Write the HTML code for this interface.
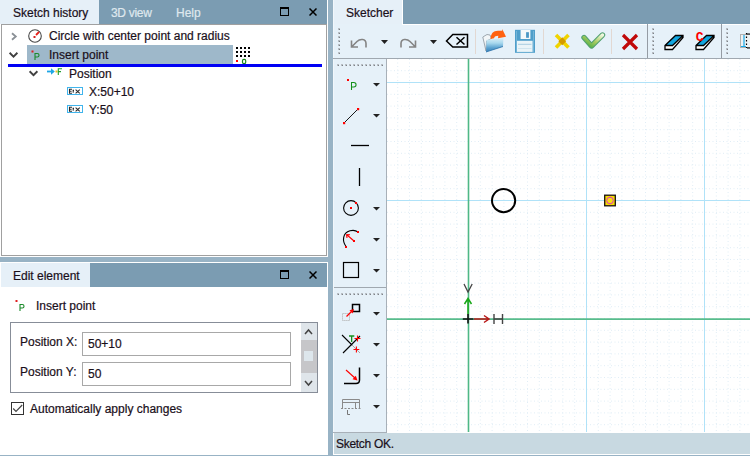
<!DOCTYPE html>
<html><head><meta charset="utf-8">
<style>
*{margin:0;padding:0;box-sizing:border-box}
html,body{width:750px;height:456px;overflow:hidden}
body{position:relative;background:#98b3c5;font-family:"Liberation Sans",sans-serif;font-size:12px;color:#000}
.a{position:absolute}
.t{position:absolute;white-space:nowrap;line-height:14px;-webkit-text-stroke:0.2px currentColor}
</style></head><body>

<!-- LEFT TOP PANEL -->
<div class="a" style="left:0;top:0;width:328px;height:257px;background:#fff"></div>
<div class="a" style="left:0;top:0;width:327px;height:24px;background:#7b9cb2"></div>
<div class="a" style="left:0;top:0;width:99px;height:24px;background:#e6f0f8"></div>
<div class="t" style="left:13px;top:6px;color:#1a0f1a">Sketch history</div>
<div class="t" style="left:111px;top:6px;color:#dfe8ee;letter-spacing:-0.3px">3D view</div>
<div class="t" style="left:176px;top:6px;color:#dfe8ee">Help</div>
<!-- restore & close -->
<div class="a" style="left:280px;top:7px;width:9px;height:9px;border:1px solid #000;border-top-width:2px"></div>
<svg class="a" style="left:309px;top:8px" width="8" height="8" viewBox="0 0 8 8"><path d="M0.5 0.5L7.5 7.5M7.5 0.5L0.5 7.5" stroke="#000" stroke-width="1.5"/></svg>
<!-- tree box -->
<div class="a" style="left:1px;top:24px;width:326px;height:232px;border:1px solid #a0a0a0;background:#fff"></div>


<!-- tree content -->
<svg class="a" style="left:0;top:0" width="40" height="80" viewBox="0 0 40 80"><path d="M12 33.2L15.8 36.5L12 39.8" fill="none" stroke="#8a9096" stroke-width="1.8"/><path d="M9.6 52.8L13.5 56.6L17.4 52.8" fill="none" stroke="#404040" stroke-width="1.9"/><path d="M29.6 71.3L33.5 75.1L37.4 71.3" fill="none" stroke="#404040" stroke-width="1.9"/></svg>
<svg class="a" style="left:27px;top:28px" width="16" height="16" viewBox="0 0 16 16"><circle cx="8" cy="8" r="6.3" fill="none" stroke="#484848" stroke-width="1.1"/><path d="M9 7L12 4" stroke="#e8201a" stroke-width="1.8"/><rect x="6.5" y="8" width="2" height="2" fill="#d82020"/></svg>
<div class="t" style="left:49px;top:29px;color:#1a0f1a">Circle with center point and radius</div>
<div class="a" style="left:27px;top:45px;width:206px;height:19px;background:#9eb8ca"></div>

<svg class="a" style="left:30px;top:49px" width="12" height="14" viewBox="0 0 12 14"><rect x="1.5" y="1.5" width="2" height="2" fill="#d82020"/><path d="M5 11V4.5H7.3C9.6 4.5 9.6 8 7.3 8H5" fill="none" stroke="#1a8a2a" stroke-width="1.1"/></svg>
<div class="t" style="left:49px;top:48px;color:#1a0f1a">Insert point</div>
<svg class="a" style="left:236px;top:47px" width="14" height="18" viewBox="0 0 14 18">
<g fill="#000"><rect x="0" y="0" width="2" height="2"/><rect x="4" y="0" width="2" height="2"/><rect x="8" y="0" width="2" height="2"/><rect x="12" y="0" width="2" height="2"/>
<rect x="0" y="4" width="2" height="2"/><rect x="4" y="4" width="2" height="2"/><rect x="8" y="4" width="2" height="2"/><rect x="12" y="4" width="2" height="2"/>
<rect x="0" y="8" width="2" height="2"/><rect x="4" y="8" width="2" height="2"/><rect x="8" y="8" width="2" height="2"/><rect x="12" y="8" width="2" height="2"/></g>
<rect x="0" y="13" width="2" height="2" fill="#f00"/><rect x="6.5" y="12.3" width="3.2" height="4.3" rx="1.4" fill="none" stroke="#1a8a1a" stroke-width="1.2"/></svg>
<div class="a" style="left:8px;top:64px;width:314px;height:3px;background:#0000f4"></div>

<svg class="a" style="left:46px;top:67px" width="18" height="9" viewBox="0 0 18 9"><path d="M1 4.5H6" fill="none" stroke="#1ea6e6" stroke-width="1.8"/><path d="M5 1.2L8.8 4.5L5 7.8Z" fill="#1ea6e6"/><rect x="9.5" y="3.5" width="2" height="2" fill="#e8c020"/><path d="M12.3 8V1.8H16M12.3 4.6H15" fill="none" stroke="#20a030" stroke-width="1.1"/></svg>
<div class="t" style="left:69px;top:67px;color:#1a0f1a">Position</div>
<svg class="a" style="left:67px;top:87px" width="17" height="9" viewBox="0 0 17 9"><rect x="0.5" y="0.5" width="15" height="7" fill="#fff" stroke="#40b4ec" stroke-width="1"/><path d="M5 2.2H2.5V6.3H5M2.5 4.2H4.6M5.6 3.4H7M5.6 4.9H7M8.6 2.6L12.8 6.3M12.8 2.6L8.6 6.3" fill="none" stroke="#2a2a2a" stroke-width="1.1"/></svg>
<div class="t" style="left:89px;top:85px;color:#1a0f1a">X:50+10</div>
<svg class="a" style="left:67px;top:105px" width="17" height="9" viewBox="0 0 17 9"><rect x="0.5" y="0.5" width="15" height="7" fill="#fff" stroke="#40b4ec" stroke-width="1"/><path d="M5 2.2H2.5V6.3H5M2.5 4.2H4.6M5.6 3.4H7M5.6 4.9H7M8.6 2.6L12.8 6.3M12.8 2.6L8.6 6.3" fill="none" stroke="#2a2a2a" stroke-width="1.1"/></svg>
<div class="t" style="left:89px;top:103px;color:#1a0f1a">Y:50</div>

<!-- EDIT ELEMENT PANEL -->
<div class="a" style="left:0;top:262px;width:328px;height:193px;background:#fff"></div>
<div class="a" style="left:1px;top:263px;width:326px;height:24px;background:#7b9cb2"></div>
<div class="a" style="left:1px;top:263px;width:89px;height:24px;background:#e6f0f8"></div>
<div class="t" style="left:13px;top:269px;color:#1a0f1a">Edit element</div>


<div class="a" style="left:280px;top:270px;width:9px;height:9px;border:1px solid #000;border-top-width:2px"></div>
<svg class="a" style="left:309px;top:271px" width="8" height="8" viewBox="0 0 8 8"><path d="M0.5 0.5L7.5 7.5M7.5 0.5L0.5 7.5" stroke="#000" stroke-width="1.5"/></svg>
<!-- edit content -->
<svg class="a" style="left:14px;top:298px" width="12" height="14" viewBox="0 0 12 14"><rect x="1.5" y="2" width="2" height="2" fill="#e02020"/><path d="M6 13V6.5H8.3C10.6 6.5 10.6 10 8.3 10H6" fill="none" stroke="#1a8a2a" stroke-width="1.1"/></svg>
<div class="t" style="left:36px;top:299px;color:#1a0f1a">Insert point</div>
<div class="a" style="left:10px;top:322px;width:308px;height:71px;border:1px solid #878d98"></div>
<div class="t" style="left:20px;top:335px;color:#1a0f1a">Position X:</div>
<div class="a" style="left:82px;top:332px;width:209px;height:24px;border:1px solid #a8a8a8;background:#fff"></div>
<div class="t" style="left:88px;top:337px;color:#1a0f1a">50+10</div>
<div class="t" style="left:20px;top:365px;color:#1a0f1a">Position Y:</div>
<div class="a" style="left:82px;top:362px;width:209px;height:24px;border:1px solid #a8a8a8;background:#fff"></div>
<div class="t" style="left:88px;top:367px;color:#1a0f1a">50</div>
<div class="a" style="left:301px;top:323px;width:16px;height:69px;background:#dfe5ea"></div>
<div class="a" style="left:301px;top:340px;width:16px;height:33px;background:#c6c6c9"></div>
<div class="a" style="left:304px;top:351px;width:9px;height:10px;background:#dde6ec"></div>
<svg class="a" style="left:304px;top:328px" width="9" height="8" viewBox="0 0 9 8"><path d="M1 6L4.5 2L8 6" fill="none" stroke="#444" stroke-width="1.5"/></svg>
<svg class="a" style="left:304px;top:379px" width="9" height="8" viewBox="0 0 9 8"><path d="M1 2L4.5 6L8 2" fill="none" stroke="#444" stroke-width="1.5"/></svg>
<div class="a" style="left:11px;top:402px;width:13px;height:13px;border:1px solid #333;background:#fff"></div>
<svg class="a" style="left:11px;top:402px" width="13" height="13" viewBox="0 0 13 13"><path d="M2.2 6.5L5 9.3L11.2 3" fill="none" stroke="#444" stroke-width="1.2"/></svg>
<div class="t" style="left:30px;top:402px;color:#1a0f1a">Automatically apply changes</div>

<!-- RIGHT PANEL -->
<div class="a" style="left:333px;top:0;width:417px;height:455px;background:#fff"></div>
<div class="a" style="left:403px;top:0;width:347px;height:24px;background:#7b9cb2"></div>
<div class="a" style="left:333px;top:0;width:69px;height:24px;background:#e6f0f8"></div>
<div class="t" style="left:346px;top:6px;color:#1a0f1a">Sketcher</div>
<!-- toolbar -->
<div class="a" style="left:334px;top:24px;width:416px;height:34px;background:#e6f1f9"></div>
<div class="a" style="left:402px;top:24px;width:348px;height:1px;background:#fff"></div>
<div class="a" style="left:333px;top:0;width:1px;height:433px;background:#f2f7fb"></div>
<div class="a" style="left:333px;top:58px;width:417px;height:1px;background:#a0a8b0"></div>
<!-- vertical toolbar -->
<div class="a" style="left:334px;top:59px;width:52px;height:373px;background:#e6f1f9"></div>
<div class="a" style="left:386px;top:59px;width:1px;height:373px;background:#a8b0b8"></div>
<div class="a" style="left:333px;top:432px;width:54px;height:1px;background:#a8b0b8"></div>
<!-- status bar -->
<div class="a" style="left:334px;top:433px;width:416px;height:21px;background:#c8d9e1"></div>
<div class="t" style="left:336px;top:437px;color:#1a0f1a;letter-spacing:-0.3px">Sketch OK.</div>


<svg class="a" style="left:0;top:0" width="750" height="456" viewBox="0 0 750 456">
<!-- canvas -->
<rect x="387" y="59" width="363" height="373" fill="#fff"/>
<path d="M397.7 59V432M409.5 59V432M421.3 59V432M433.1 59V432M444.9 59V432M456.7 59V432M468.5 59V432M480.3 59V432M492.1 59V432M503.9 59V432M515.7 59V432M527.5 59V432M539.3 59V432M551.1 59V432M562.9 59V432M574.7 59V432M586.5 59V432M598.3 59V432M610.1 59V432M621.9 59V432M633.7 59V432M645.5 59V432M657.3 59V432M669.1 59V432M680.9 59V432M692.7 59V432M704.5 59V432M716.3 59V432M728.1 59V432M739.9 59V432M387 70.7H750M387 82.5H750M387 94.3H750M387 106.1H750M387 117.9H750M387 129.7H750M387 141.5H750M387 153.3H750M387 165.1H750M387 176.9H750M387 188.7H750M387 200.5H750M387 212.3H750M387 224.1H750M387 235.9H750M387 247.7H750M387 259.5H750M387 271.3H750M387 283.1H750M387 294.9H750M387 306.7H750M387 318.5H750M387 330.3H750M387 342.1H750M387 353.9H750M387 365.7H750M387 377.5H750M387 389.3H750M387 401.1H750M387 412.9H750M387 424.7H750" stroke="#e0edf6" stroke-width="1" stroke-dasharray="1 2.5" fill="none"/>
<path d="M586.5 59V432M704.5 59V432M387 82.5H750M387 200.5H750" stroke="#b0e2f8" stroke-width="1" fill="none"/>
<path d="M468.5 59V432" stroke="#4fb886" stroke-width="1.6" fill="none"/><path d="M387 319H750" stroke="#58bc8c" stroke-width="1.75" fill="none"/>
<circle cx="503.6" cy="200.6" r="11.6" fill="none" stroke="#000" stroke-width="2"/>
<rect x="604.7" y="195.2" width="10.6" height="10.6" fill="#f4dc00" stroke="#1a1010" stroke-width="1.3"/>
<circle cx="610" cy="200.5" r="3.3" fill="#f6e010" stroke="#e030d0" stroke-width="1"/>
<path d="M474 319H488.5M484 315.5L489 319L484 322.5" stroke="#b81818" stroke-width="1.5" fill="none"/>
<path d="M468 314V298.5M464.5 304L468 298.5L471.5 304" stroke="#18a818" stroke-width="1.5" fill="none"/>
<path d="M462.8 319H473.5M468 314V323.5" stroke="#111" stroke-width="1.6" fill="none"/>
<path d="M494 314V324M502.5 314V324M494 319H502.5" stroke="#444" stroke-width="1.4" fill="none"/>
<path d="M464 284L468 292L472.2 284" stroke="#444" stroke-width="1.3" fill="none"/>

<!-- top toolbar icons -->
<g><rect x="338" y="28" width="2" height="2" fill="#b8bec4"/><rect x="339" y="29" width="1" height="1" fill="#7c8288"/><rect x="652" y="28" width="2" height="2" fill="#b8bec4"/><rect x="653" y="29" width="1" height="1" fill="#7c8288"/><rect x="726" y="28" width="2" height="2" fill="#b8bec4"/><rect x="727" y="29" width="1" height="1" fill="#7c8288"/><rect x="338" y="32" width="2" height="2" fill="#b8bec4"/><rect x="339" y="33" width="1" height="1" fill="#7c8288"/><rect x="652" y="32" width="2" height="2" fill="#b8bec4"/><rect x="653" y="33" width="1" height="1" fill="#7c8288"/><rect x="726" y="32" width="2" height="2" fill="#b8bec4"/><rect x="727" y="33" width="1" height="1" fill="#7c8288"/><rect x="338" y="36" width="2" height="2" fill="#b8bec4"/><rect x="339" y="37" width="1" height="1" fill="#7c8288"/><rect x="652" y="36" width="2" height="2" fill="#b8bec4"/><rect x="653" y="37" width="1" height="1" fill="#7c8288"/><rect x="726" y="36" width="2" height="2" fill="#b8bec4"/><rect x="727" y="37" width="1" height="1" fill="#7c8288"/><rect x="338" y="40" width="2" height="2" fill="#b8bec4"/><rect x="339" y="41" width="1" height="1" fill="#7c8288"/><rect x="652" y="40" width="2" height="2" fill="#b8bec4"/><rect x="653" y="41" width="1" height="1" fill="#7c8288"/><rect x="726" y="40" width="2" height="2" fill="#b8bec4"/><rect x="727" y="41" width="1" height="1" fill="#7c8288"/><rect x="338" y="44" width="2" height="2" fill="#b8bec4"/><rect x="339" y="45" width="1" height="1" fill="#7c8288"/><rect x="652" y="44" width="2" height="2" fill="#b8bec4"/><rect x="653" y="45" width="1" height="1" fill="#7c8288"/><rect x="726" y="44" width="2" height="2" fill="#b8bec4"/><rect x="727" y="45" width="1" height="1" fill="#7c8288"/><rect x="338" y="48" width="2" height="2" fill="#b8bec4"/><rect x="339" y="49" width="1" height="1" fill="#7c8288"/><rect x="652" y="48" width="2" height="2" fill="#b8bec4"/><rect x="653" y="49" width="1" height="1" fill="#7c8288"/><rect x="726" y="48" width="2" height="2" fill="#b8bec4"/><rect x="727" y="49" width="1" height="1" fill="#7c8288"/><rect x="338" y="52" width="2" height="2" fill="#b8bec4"/><rect x="339" y="53" width="1" height="1" fill="#7c8288"/><rect x="652" y="52" width="2" height="2" fill="#b8bec4"/><rect x="653" y="53" width="1" height="1" fill="#7c8288"/><rect x="726" y="52" width="2" height="2" fill="#b8bec4"/><rect x="727" y="53" width="1" height="1" fill="#7c8288"/><rect x="337" y="64" width="2" height="2" fill="#b8bec4"/><rect x="338" y="65" width="1" height="1" fill="#7c8288"/><rect x="337" y="293" width="2" height="2" fill="#b8bec4"/><rect x="338" y="294" width="1" height="1" fill="#7c8288"/><rect x="341" y="64" width="2" height="2" fill="#b8bec4"/><rect x="342" y="65" width="1" height="1" fill="#7c8288"/><rect x="341" y="293" width="2" height="2" fill="#b8bec4"/><rect x="342" y="294" width="1" height="1" fill="#7c8288"/><rect x="345" y="64" width="2" height="2" fill="#b8bec4"/><rect x="346" y="65" width="1" height="1" fill="#7c8288"/><rect x="345" y="293" width="2" height="2" fill="#b8bec4"/><rect x="346" y="294" width="1" height="1" fill="#7c8288"/><rect x="349" y="64" width="2" height="2" fill="#b8bec4"/><rect x="350" y="65" width="1" height="1" fill="#7c8288"/><rect x="349" y="293" width="2" height="2" fill="#b8bec4"/><rect x="350" y="294" width="1" height="1" fill="#7c8288"/><rect x="353" y="64" width="2" height="2" fill="#b8bec4"/><rect x="354" y="65" width="1" height="1" fill="#7c8288"/><rect x="353" y="293" width="2" height="2" fill="#b8bec4"/><rect x="354" y="294" width="1" height="1" fill="#7c8288"/><rect x="357" y="64" width="2" height="2" fill="#b8bec4"/><rect x="358" y="65" width="1" height="1" fill="#7c8288"/><rect x="357" y="293" width="2" height="2" fill="#b8bec4"/><rect x="358" y="294" width="1" height="1" fill="#7c8288"/><rect x="361" y="64" width="2" height="2" fill="#b8bec4"/><rect x="362" y="65" width="1" height="1" fill="#7c8288"/><rect x="361" y="293" width="2" height="2" fill="#b8bec4"/><rect x="362" y="294" width="1" height="1" fill="#7c8288"/><rect x="365" y="64" width="2" height="2" fill="#b8bec4"/><rect x="366" y="65" width="1" height="1" fill="#7c8288"/><rect x="365" y="293" width="2" height="2" fill="#b8bec4"/><rect x="366" y="294" width="1" height="1" fill="#7c8288"/><rect x="369" y="64" width="2" height="2" fill="#b8bec4"/><rect x="370" y="65" width="1" height="1" fill="#7c8288"/><rect x="369" y="293" width="2" height="2" fill="#b8bec4"/><rect x="370" y="294" width="1" height="1" fill="#7c8288"/><rect x="373" y="64" width="2" height="2" fill="#b8bec4"/><rect x="374" y="65" width="1" height="1" fill="#7c8288"/><rect x="373" y="293" width="2" height="2" fill="#b8bec4"/><rect x="374" y="294" width="1" height="1" fill="#7c8288"/><rect x="377" y="64" width="2" height="2" fill="#b8bec4"/><rect x="378" y="65" width="1" height="1" fill="#7c8288"/><rect x="377" y="293" width="2" height="2" fill="#b8bec4"/><rect x="378" y="294" width="1" height="1" fill="#7c8288"/><rect x="381" y="64" width="2" height="2" fill="#b8bec4"/><rect x="382" y="65" width="1" height="1" fill="#7c8288"/><rect x="381" y="293" width="2" height="2" fill="#b8bec4"/><rect x="382" y="294" width="1" height="1" fill="#7c8288"/></g>
<path d="M334 287.5H386" stroke="#a0a8b0" stroke-width="1"/>
<path d="M647.5 24V58M721.5 24V58" stroke="#959ca4" stroke-width="1"/>
<path d="M475.5 29V54M543.5 29V54M611.5 29V54" stroke="#e2d8d2" stroke-width="1"/>
<!-- undo -->
<path d="M351.5 40.5V47H358M351.5 47L357 41.5C360 38.5 366 38.5 366 43.5V47.5" stroke="#848484" stroke-width="1.6" fill="none"/>
<path d="M381 40H388L384.5 44Z" fill="#222"/>
<!-- redo -->
<path d="M415.5 40.5V47H409M415.5 47L410 41.5C407 38.5 401 38.5 401 43.5V47.5" stroke="#848484" stroke-width="1.6" fill="none"/>
<path d="M430 40H437L433.5 44Z" fill="#222"/>
<!-- backspace -->
<path d="M446.5 41L452.8 34.5H467.5V47H452.8Z" stroke="#000" stroke-width="1.5" fill="none" stroke-linejoin="miter"/>
<path d="M456.5 37.3L464.5 44.5M464.5 37.3L456.5 44.5" stroke="#000" stroke-width="1.5"/>
<!-- folder -->
<defs>
<linearGradient id="fb" x1="0" y1="0" x2="0" y2="1"><stop offset="0" stop-color="#d8eef6"/><stop offset="0.35" stop-color="#a8d8ee"/><stop offset="0.7" stop-color="#5aa2d0"/><stop offset="1" stop-color="#3a80b8"/></linearGradient>
<linearGradient id="fl" x1="0" y1="0" x2="0" y2="1"><stop offset="0" stop-color="#5aa4d4"/><stop offset="1" stop-color="#3a8cc4"/></linearGradient>
<linearGradient id="gc" x1="0" y1="1" x2="1" y2="0"><stop offset="0" stop-color="#40a840"/><stop offset="0.5" stop-color="#a8cc60"/><stop offset="1" stop-color="#f0f8e0"/></linearGradient>
</defs>
<path d="M482.8 37L487 34.5L490 35L491.5 38.5L486.5 41L486 51Z" fill="#f2f6f8" stroke="#8c969e" stroke-width="0.8"/>
<path d="M486.5 39.7L503.4 38.2L503 46.5L486 52Z" fill="url(#fb)"/>
<path d="M486 52L503 46.5" stroke="#2a70a8" stroke-width="0.8"/>
<path d="M490.5 39C491 33.5 493 31 498 30.8H502.2V29L506 36.8L498 38.2L498.3 35.7C496 35.8 494.5 36.3 494 38.3Z" fill="#ff6210"/>
<!-- floppy -->
<rect x="515" y="29.8" width="20" height="23" fill="#4f9eca"/>
<path d="M516.5 31V52M533.5 31V52" stroke="#8cc4e0" stroke-width="1" opacity="0.6"/>
<rect x="520.6" y="30" width="9.8" height="9" fill="#f4f8fa"/>
<rect x="526.1" y="32.2" width="2.8" height="5.6" fill="#4a96c4"/>
<rect x="517" y="40.8" width="15.6" height="11.1" fill="#eaf4f8"/>
<path d="M518 44.3H531.5" stroke="#a8cce0" stroke-width="1"/>
<path d="M518 48.5H531.5" stroke="#d0e4ee" stroke-width="1"/>
<!-- yellow x -->
<path d="M556 35L568.5 47.5M568.5 35L556 47.5" stroke="#f0d400" stroke-width="3.6"/>
<rect x="559.5" y="38.5" width="5.5" height="5.5" fill="#d49a00" transform="rotate(45 562.25 41.25)"/>
<!-- green check -->
<path d="M584 37.5L591.5 46L602.5 35" stroke="#50a070" stroke-width="5.4" stroke-linejoin="round" stroke-linecap="round" fill="none"/>
<path d="M584 37.5L591.5 46L602.5 35" stroke="url(#gc)" stroke-width="3.4" stroke-linejoin="round" stroke-linecap="round" fill="none"/>
<!-- red x -->
<path d="M623 35L637 49M637 35L623 49" stroke="#c00808" stroke-width="3.2"/>
<!-- erasers -->
<g id="er">
<path d="M665 45.5L675.5 35.5H683L672.5 45.5Z" fill="#12a6e0"/>
<path d="M665 45.5H672.5V49.5H665Z" fill="#fff"/>
<path d="M672.5 45.5L683 35.5V37.5L672.5 49.5Z" fill="#fff"/>
<path d="M665 45.5L675.5 35.5H683V37.5L672.5 49.5H665ZM665 45.5H672.5L683 35.5" stroke="#000" stroke-width="1.3" fill="none" stroke-linejoin="miter"/>
</g>
<use href="#er" x="31"/>
<text x="695.8" y="41" font-family="Liberation Mono" font-size="13" font-weight="bold" fill="#f00">C</text>
<!-- partial icon -->
<rect x="740.5" y="34.5" width="10" height="13" fill="#eef2f4" stroke="#b0b0b0" stroke-width="1"/>
<path d="M744 35V46M741 46.5H746" stroke="#18a8e8" stroke-width="1.2"/>
<path d="M746.5 33V48" stroke="#000" stroke-width="1.2" stroke-dasharray="1.5 2"/>
<path d="M747 34H750M747 48H750" stroke="#000" stroke-width="1.2"/>

<!-- vertical toolbar icons -->
<g fill="#222">
<path d="M373 83H380L376.5 86.5Z"/><path d="M373 114H380L376.5 117.5Z"/>
<path d="M373 207H380L376.5 210.5Z"/><path d="M373 238H380L376.5 241.5Z"/><path d="M373 269H380L376.5 272.5Z"/>
<path d="M373 312H380L376.5 315.5Z"/><path d="M373 343H380L376.5 346.5Z"/><path d="M373 374H380L376.5 377.5Z"/><path d="M373 405H380L376.5 408.5Z"/>
</g>
<rect x="347" y="79" width="2" height="2" fill="#f00"/>
<path d="M351.5 90V82.5H353.8C356.8 82.5 356.8 87 353.8 87H351.5" fill="none" stroke="#12901a" stroke-width="1.05"/>
<path d="M344 123L358 109" stroke="#000" stroke-width="0.9"/>
<rect x="343" y="122" width="2.2" height="2.2" fill="#f00"/><rect x="357" y="108" width="2.2" height="2.2" fill="#f00"/>
<path d="M351 145.5H369" stroke="#000" stroke-width="1.3"/>
<path d="M359.5 168V186" stroke="#000" stroke-width="1.3"/>
<circle cx="351" cy="208" r="7.4" fill="none" stroke="#000" stroke-width="1.1"/>
<rect x="350" y="207" width="2" height="2" fill="#f00"/><rect x="355" y="202" width="2" height="2" fill="#f00"/>
<path d="M346 246.5C342 241 342.5 233 350 230.8C353 230 356 230.5 358 232" fill="none" stroke="#000" stroke-width="1.1"/>
<path d="M346.5 234.5L354 241M346.5 234.5L347 238M346.5 234.5L350 234.8" stroke="#f00" stroke-width="1.1" fill="none"/>
<rect x="345" y="246" width="2" height="2" fill="#f00"/><rect x="357" y="231" width="2" height="2" fill="#f00"/><rect x="353" y="240" width="2" height="2" fill="#f00"/>
<rect x="343.5" y="262.5" width="15" height="15" fill="none" stroke="#000" stroke-width="1.2"/>
<!-- point on object -->
<rect x="342.5" y="313.5" width="7" height="7" fill="none" stroke="#b4b4b4" stroke-width="1" stroke-dasharray="1.2 0.8"/>
<rect x="352.5" y="304.5" width="7" height="7" fill="none" stroke="#000" stroke-width="1.5"/>
<path d="M346.5 316.5L352.5 310.5" stroke="#f00" stroke-width="1.2" fill="none"/>
<path d="M354 309L349.5 310.3L352.7 313.5Z" fill="#f00"/>
<!-- trim -->
<path d="M342 335L352 345" stroke="#000" stroke-width="1.1"/>
<path d="M352 345L360 353" stroke="#a8a8a8" stroke-width="1"/>
<path d="M343 353L360 336" stroke="#000" stroke-width="1.1"/>
<path d="M349 336H354.3M351.65 336V342" stroke="#18901e" stroke-width="1.3"/>
<path d="M354.5 338.5H360.5M357.5 335.5V341.5M353.5 349.5H359.3M356.4 346.6V352.4" stroke="#f00" stroke-width="1.1"/>
<!-- fillet -->
<path d="M344 383.5H356Q359.5 383.5 359.5 380V367.5" fill="none" stroke="#000" stroke-width="1.5"/>
<path d="M346 370L355.5 378.5" stroke="#f00" stroke-width="1.1" fill="none"/>
<path d="M357.5 380.5L352.5 379.2L355.8 375.8Z" fill="#f00"/>
<!-- external -->
<path d="M342.5 408V399.5H359.5V408M342.5 402.5H359.5M355.5 402.5V408" stroke="#8a8a8a" stroke-width="1" fill="none"/>
<path d="M341 408.5H361" stroke="#8a8a8a" stroke-width="1" stroke-dasharray="2 1.5" fill="none"/>
<path d="M347.5 410V414.5H350" stroke="#777" stroke-width="1" fill="none"/>
</svg>

</body></html>
